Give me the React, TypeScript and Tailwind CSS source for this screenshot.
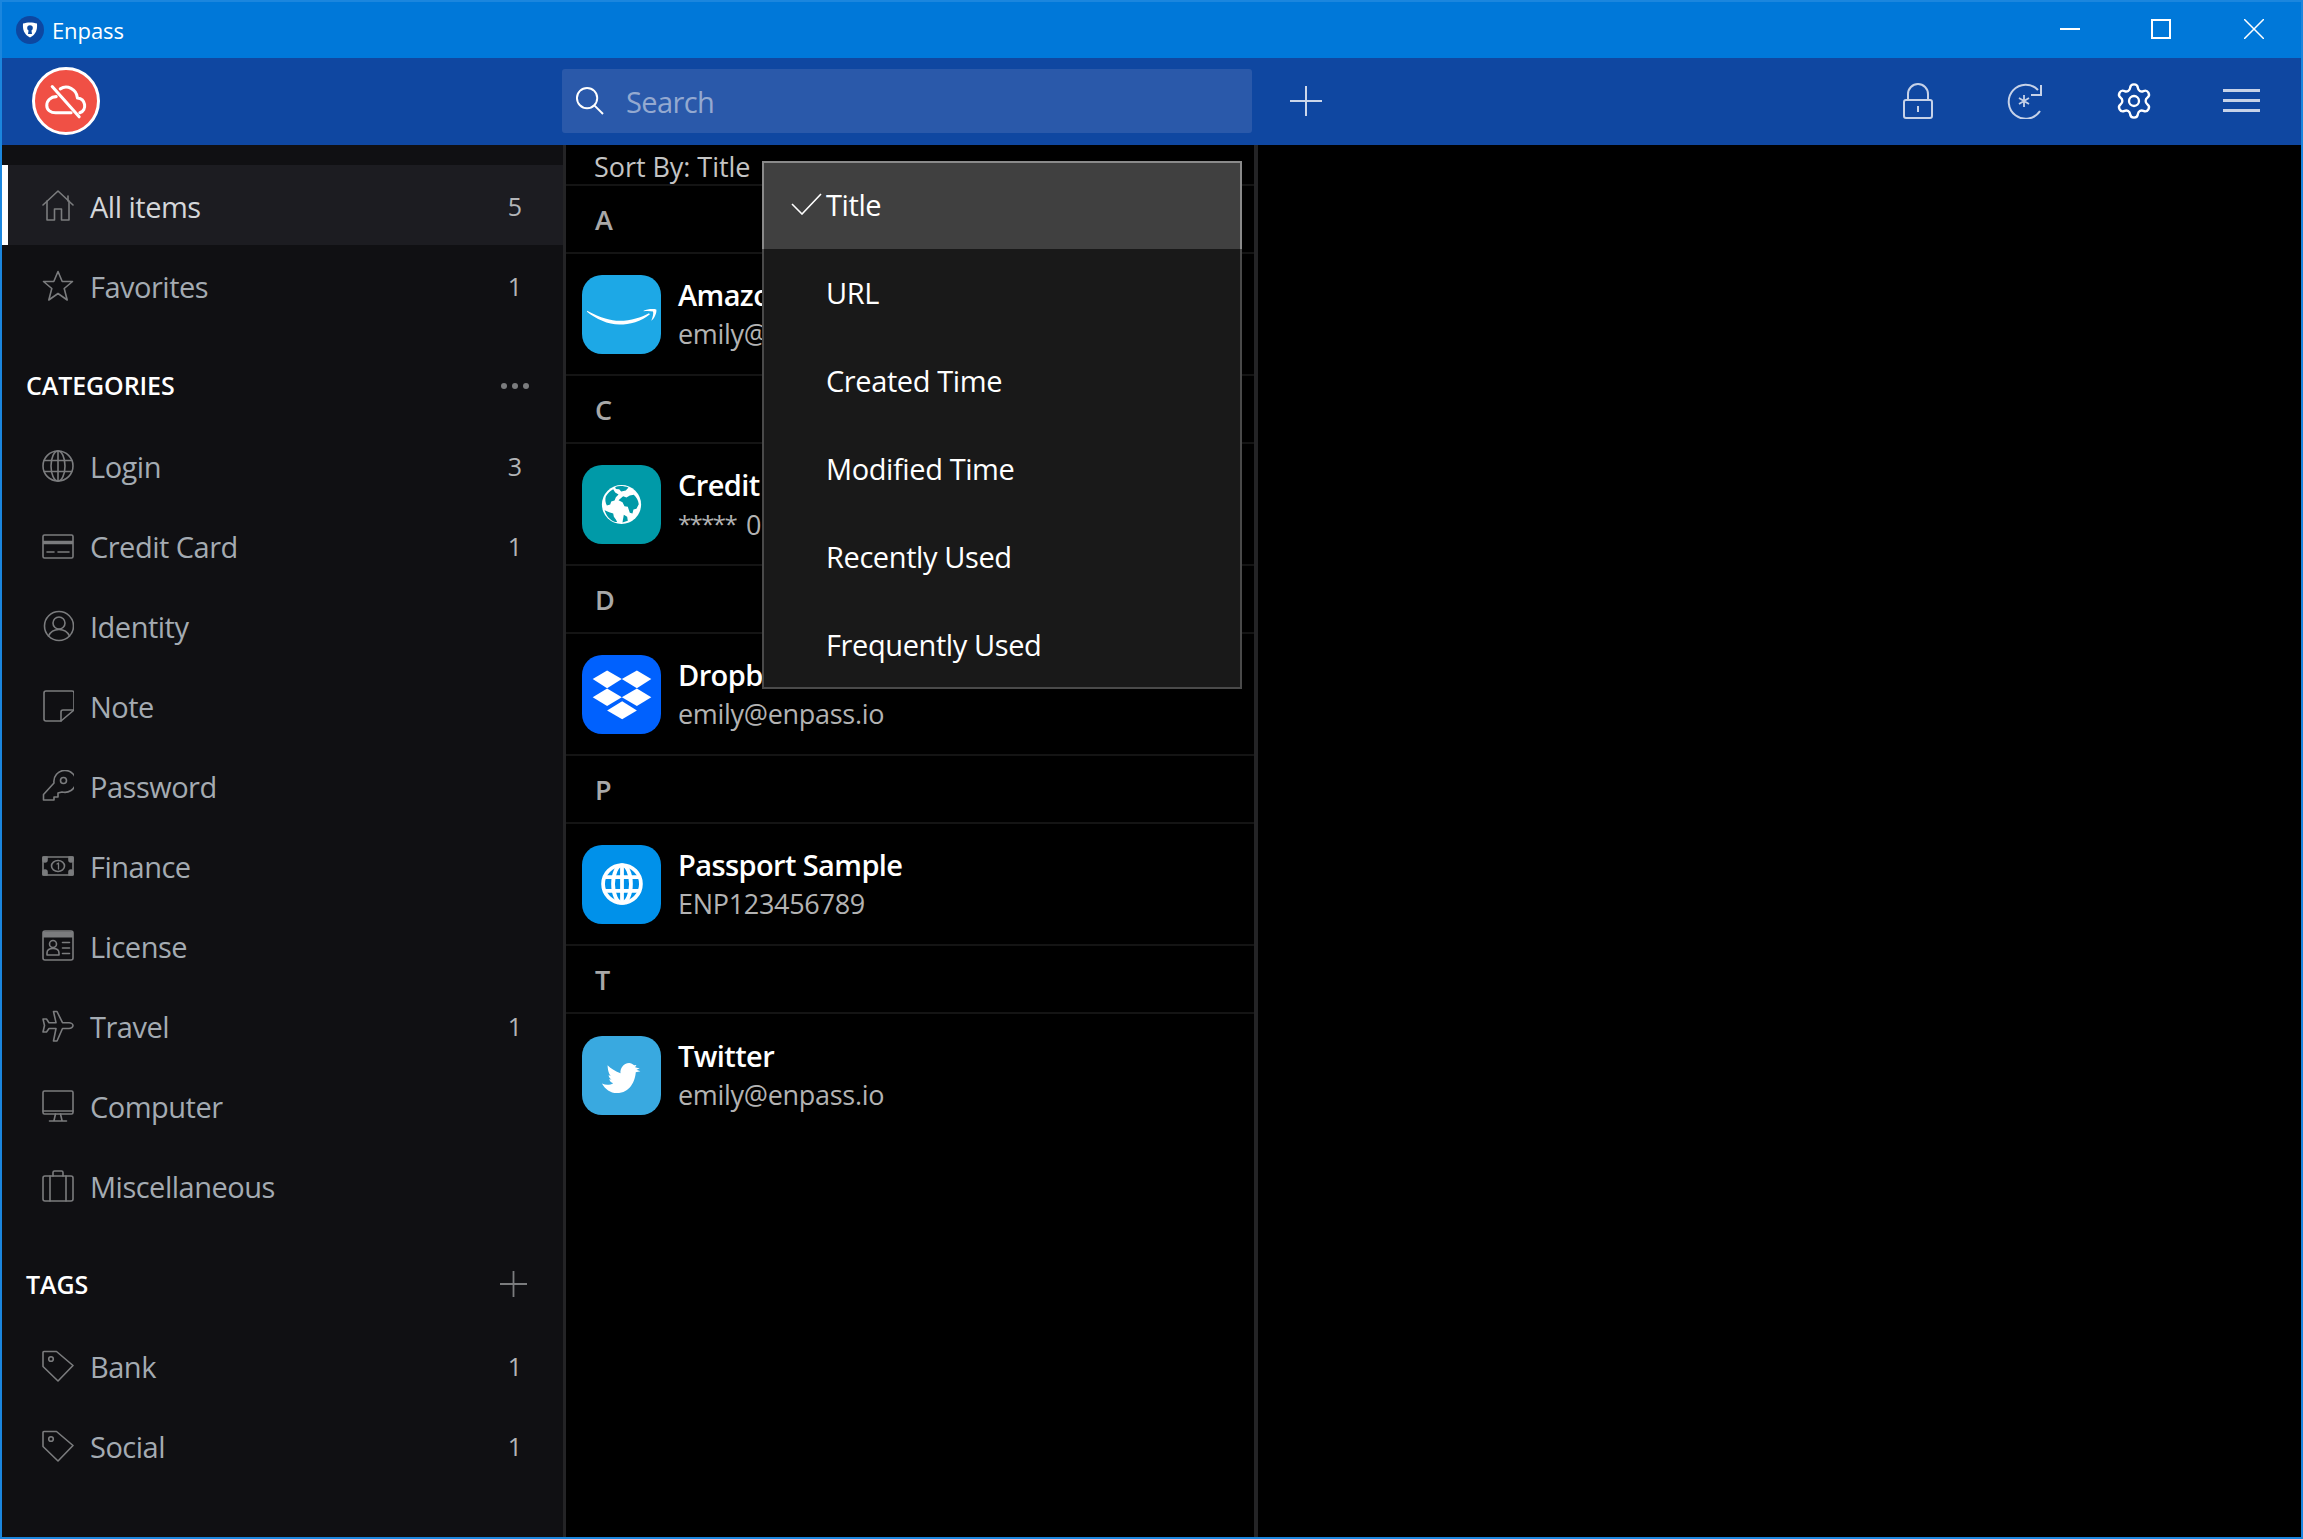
import type { ReactNode } from "react";
import { Settings } from "lucide-react";

const Glyph = ({ children }: { children: ReactNode }) => (
  <svg
    viewBox="0 0 32 32"
    fill="none"
    stroke="currentColor"
    strokeWidth="1.6"
    strokeLinecap="round"
    strokeLinejoin="round"
    className="mb-[2px] h-[32px] w-[32px] shrink-0 text-[#7b7c7e]"
  >
    {children}
  </svg>
);

const icons: Record<string, ReactNode> = {
  home: (
    <>
      <path d="M1 15 16 1l15 14" />
      <path d="M5 11v19h7.500V19h7v11H27V11" />
      <path d="M26 6v5" />
    </>
  ),
  star: <path d="M16 1.500l4.200 10h10.300l-8.300 7 3 11.500L16 23.500 6.800 30l3-11.500-8.300-7h10.300z" />,
  globe: (
    <>
      <circle cx="16" cy="16" r="15" />
      <ellipse cx="16" cy="16" rx="7" ry="15" />
      <path d="M16 1v30M2.500 10.500h27M2.500 21.500h27" />
    </>
  ),
  card: (
    <>
      <rect x="1" y="5" width="30" height="23" rx="1.500" />
      <path d="M1 12.500h30" strokeWidth="3.500" strokeLinecap="butt" />
      <path d="M5 22h7M16 22h11" />
    </>
  ),
  identity: (
    <>
      <circle cx="17" cy="16" r="14.500" />
      <circle cx="17" cy="13" r="6" />
      <path d="M6.500 26c2-4.500 6-6.500 10.500-6.500s8.500 2 10.500 6.500" />
    </>
  ),
  note: (
    <>
      <path d="M19 31H4a2 2 0 0 1-2-2V3a2 2 0 0 1 2-2h26a2 2 0 0 1 2 2v17z" />
      <path d="M19 31V22a2 2 0 0 1 2-2h11" />
    </>
  ),
  key: (
    <>
      <path d="M12 13a11 11 0 1 1 8 9l-4 1v4h-4v3H1.500v-5.500z" />
      <circle cx="21.500" cy="10.500" r="3" />
    </>
  ),
  finance: (
    <>
      <rect x="1" y="7" width="30" height="18" rx="1" />
      <path d="M1 7h4v3a2 2 0 0 1-4 0zM31 7h-4v3a2 2 0 0 0 4 0zM1 25h4v-3a2 2 0 0 0-4 0zM31 25h-4v-3a2 2 0 0 1 4 0z" fill="currentColor" />
      <ellipse cx="16" cy="16" rx="6.500" ry="5.500" />
      <path d="M15 14l1.500-1v6" strokeWidth="1.300" />
    </>
  ),
  license: (
    <>
      <rect x="1" y="1" width="30" height="29" rx="2" />
      <path d="M1 4.500h30" strokeWidth="6" strokeLinecap="butt" />
      <circle cx="11" cy="14" r="3.500" />
      <path d="M5 25v-2c0-3 2.500-4.500 6-4.500s6 1.500 6 4.500v2z" />
      <path d="M20.500 12.500h7M20.500 18h7M20.500 23.500h7" />
    </>
  ),
  plane: (
    <path d="M31 15.500c0-1.500-2-2.800-4-2.800h-6.500L15 1.500h-3.500L14 12.700H7L4.500 9H1l1.500 6.500L1 22h3.500L7 18.500h7L11.500 31H15l5.500-12.500H27c2 0 4-1.500 4-3z" />
  ),
  computer: (
    <>
      <rect x="1" y="1" width="30" height="23" rx="1.500" />
      <path d="M1 21h30" />
      <path d="M13.500 24l-1.500 6.500M18.500 24l1.500 6.500M7.500 31h17" />
    </>
  ),
  misc: (
    <>
      <rect x="1" y="6" width="30" height="25" rx="2" />
      <path d="M8 6v25M24 6v25M11 6V2.500A1.500 1.500 0 0 1 12.500 1h7A1.500 1.500 0 0 1 21 2.500V6" />
    </>
  ),
  tag: (
    <>
      <path d="M2 1.500h12.500L31 15.500 16 31 1 16.500V2.500a1 1 0 0 1 1-1z" />
      <circle cx="9" cy="9" r="2.300" />
    </>
  ),
};

type NavItem = { icon: string; label: string; count?: number; active?: boolean };

const topItems: NavItem[] = [
  { icon: "home", label: "All items", count: 5, active: true },
  { icon: "star", label: "Favorites", count: 1 },
];
const categories: NavItem[] = [
  { icon: "globe", label: "Login", count: 3 },
  { icon: "card", label: "Credit Card", count: 1 },
  { icon: "identity", label: "Identity" },
  { icon: "note", label: "Note" },
  { icon: "key", label: "Password" },
  { icon: "finance", label: "Finance" },
  { icon: "license", label: "License" },
  { icon: "plane", label: "Travel", count: 1 },
  { icon: "computer", label: "Computer" },
  { icon: "misc", label: "Miscellaneous" },
];
const tags: NavItem[] = [
  { icon: "tag", label: "Bank", count: 1 },
  { icon: "tag", label: "Social", count: 1 },
];

function NavRow({ item, top = false }: { item: NavItem; top?: boolean }) {
  return (
    <div
      className={`flex h-[80px] items-center border-l-[6px] pl-[34px] pr-[41px] ${
        item.active ? "border-white bg-[#1c1c21]" : "border-transparent"
      } ${top ? "pt-[4px]" : ""}`}
    >
      <Glyph>{icons[item.icon]}</Glyph>
      <span className={`ml-[16px] flex-1 text-[29px] tracking-[-0.5px] ${item.active ? "text-[#d4d6d9]" : "text-[#a4abb2]"}`}>
        {item.label}
      </span>
      {item.count !== undefined && <span className="text-[25px] text-[#b3b5b8]">{item.count}</span>}
    </div>
  );
}

function SectionHead({ title, className, children }: { title: string; className: string; children?: ReactNode }) {
  return (
    <div className={`flex items-center justify-between pl-[24px] pr-[35px] ${className}`}>
      <span className="text-[25px] font-semibold tracking-[-0.1px] text-white">{title}</span>
      {children}
    </div>
  );
}

const AmazonTile = (
  <svg viewBox="38 46 236 236" className="h-full w-full">
    <path d="M53 153C95 175 125 183 150 183c35 0 65-11 88-23l3 3c-26 22-61 31-91 31-35 0-70-16-97-38z" fill="#fff" />
    <path d="M222 153c10-5 28-7 38-4 2 9-5 26-15 34 5-13 7-23 5-28-8-2-18-2-28-1z" fill="#fff" />
  </svg>
);

const EarthTile = (
  <svg viewBox="22 22 238 238" className="h-full w-full">
    <circle cx="141" cy="141" r="59" fill="#fff" />
    <g fill="#009aa8">
      <path d="M122 88c12-4 28-3 40 2l-8 9-14 3-6-7-10-1z" />
      <path d="M94 116c6-10 14-17 22-21l6 10 10 6-8 8-4 10-10 3-3 9-10 3c-5-9-6-19-3-28z" />
      <path d="M132 128l14-12 10 4 10-6 12-2c8 7 14 18 15 28l-7 14-9 2-3 12-8-2-6-18-10-2-6-12z" />
      <path d="M90 158l14 6 12 4 2 10 6 8 4 8c-16-1-31-14-38-36z" />
      <path d="M148 172l10 6 2 12-16 5 2-12z" />
    </g>
  </svg>
);

const DropboxTile = (
  <svg viewBox="38 46 236 236" className="h-full w-full">
    <g fill="#fff">
      <polygon points="70,118 113,92 157,118 113,145" />
      <polygon points="157,118 202,92 245,118 202,145" />
      <polygon points="70,172 113,146 157,172 113,198" />
      <polygon points="157,172 202,146 245,172 202,198" />
      <polygon points="113,212 158,184 202,212 158,238" />
    </g>
  </svg>
);

const PassportTile = (
  <svg viewBox="0 0 40 40" className="h-[42px] w-[42px]" fill="none" stroke="#fff" strokeWidth="3.600">
    <circle cx="20" cy="20" r="18" />
    <ellipse cx="20" cy="20" rx="8.500" ry="18" />
    <path d="M20 2v36M3 13.500h34M3 26.500h34" />
  </svg>
);

const TwitterTile = (
  <svg viewBox="22 15 238 238" className="h-full w-full">
    <path
      d="M82 158c12 5 24 5 34-1-7-2-10-6-12-12l7 1c-5-3-8-7-9-13l7 2c-5-5-9-13-10-32 10 10 24 19 39 24-2-15 9-30 26-31 6 0 11 3 15 7l7-1-4 7 14 4-10 4 12 4-14 3c-2 26-17 63-57 63-20 0-35-12-45-29z"
      fill="#fff"
    />
  </svg>
);

const entries = [
  { letter: "A", title: "Amazon", sub: "emily@enpass.io", tile: "bg-[#1da8e6]", art: AmazonTile },
  { letter: "C", title: "Credit Card", sub: "0000", mask: true, tile: "bg-[#009aa8]", art: EarthTile },
  { letter: "D", title: "Dropbox", sub: "emily@enpass.io", tile: "bg-[#0061fe]", art: DropboxTile },
  { letter: "P", title: "Passport Sample", sub: "ENP123456789", tile: "bg-[#0091ea]", art: PassportTile },
  { letter: "T", title: "Twitter", sub: "emily@enpass.io", tile: "bg-[#39a9e0]", art: TwitterTile },
];

const sortOptions = ["Title", "URL", "Created Time", "Modified Time", "Recently Used", "Frequently Used"];

export default function App() {
  return (
    <div className="flex h-[1539px] w-[2303px] flex-col overflow-hidden border-2 border-[#1b86de] bg-black font-['Open_Sans',sans-serif]">
      {/* title bar */}
      <div className="flex h-[56px] shrink-0 items-center bg-[#0078d9] pl-[14px] pr-[37px]">
        <svg viewBox="0 0 28 28" className="h-[28px] w-[28px]">
          <circle cx="14" cy="14" r="14" fill="#0d47a1" />
          <path d="M7 7.500c4-1.500 10-1.500 14 0 .5 6-1 11-7 14-6-3-7.500-8-7-14z" fill="#fff" />
          <circle cx="14" cy="12" r="2.800" fill="#0d47a1" />
          <path d="M12.800 13h2.400l.8 5h-4z" fill="#0d47a1" />
        </svg>
        <span className="ml-[8px] text-[22px] tracking-[-0.1px] text-white">Enpass</span>
        <div className="flex-1" />
        <div className="mb-[2px] h-[2px] w-[20px] bg-white" />
        <div className="mb-[2px] ml-[71px] h-[20px] w-[20px] border-2 border-white" />
        <svg viewBox="0 0 20 20" className="mb-[2px] ml-[73px] h-[20px] w-[20px]" stroke="#fff" strokeWidth="1.500">
          <path d="M0 0l20 20M20 0L0 20" />
        </svg>
      </div>

      {/* toolbar */}
      <div className="flex h-[87px] shrink-0 items-center bg-[#0f47a1] pb-[2px]">
        <div className="ml-[30px] flex h-[68px] w-[68px] items-center justify-center rounded-full border-[3px] border-white bg-[#f05045]">
          <svg viewBox="91 29 184 184" className="h-[62px] w-[62px]" fill="none" stroke="#fff" strokeWidth="9" strokeLinecap="round" strokeLinejoin="round">
            <path d="M154 108c-16 0-28 12-28 26s12 22 26 22h46" />
            <path d="M166 85c20-13 48 0 51 27 24 2 30 36 7 44" />
            <path d="M142 78l80 90" />
          </svg>
        </div>
        <div className="ml-[462px] flex h-[64px] w-[690px] items-center rounded-[3px] bg-[#2a59aa] pl-[13px]">
          <svg viewBox="0 0 30 30" className="h-[29px] w-[29px]" fill="none" stroke="#fff" strokeWidth="2">
            <circle cx="12.500" cy="12.500" r="10.500" />
            <path d="M20 20l9 9" />
          </svg>
          <span className="ml-[22px] pt-[2px] text-[29px] tracking-[-0.6px] text-[#94a9d0]">Search</span>
        </div>
        <svg viewBox="0 0 32 30" className="ml-[38px] h-[30px] w-[32px]" stroke="#ccd7ea" strokeWidth="2">
          <path d="M16 0v30M0 15h32" />
        </svg>
        <div className="flex-1" />
        <svg viewBox="0 0 30 36" className="h-[36px] w-[30px]" fill="none" stroke="#c6d2e8" strokeWidth="2">
          <path d="M5 17V11a10 10 0 0 1 20 0v6" />
          <rect x="1" y="17" width="28" height="18" rx="2" />
          <path d="M15 23v6" />
        </svg>
        <svg viewBox="0 0 36 36" className="ml-[74px] h-[36px] w-[36px]" fill="none" stroke="#c6d2e8" strokeWidth="2">
          <path d="M33 28A17 17 0 1 1 31 7" />
          <path d="M34 2v10H24" />
          <path d="M17 12v12M12 15l10 6M22 15l-10 6" strokeWidth="1.800" />
        </svg>
        <Settings className="ml-[71px] h-[40px] w-[40px] text-white" strokeWidth={1.4} />
        <div className="ml-[69px] mr-[41px] flex w-[37px] flex-col gap-[7px]">
          <div className="h-[3px] bg-[#c6d2e8]" />
          <div className="h-[3px] bg-[#c6d2e8]" />
          <div className="h-[3px] bg-[#c6d2e8]" />
        </div>
      </div>

      <div className="relative flex min-h-0 flex-1">
        {/* sidebar */}
        <div className="w-[561px] shrink-0 overflow-hidden bg-[#101013] pt-[20px]">
          {topItems.map((item) => (
            <NavRow key={item.label} item={item} top />
          ))}
          <SectionHead title="CATEGORIES" className="h-[102px] pt-[20px]">
            <div className="mr-[-1px] flex gap-[5px]">
              <div className="h-[6px] w-[6px] rounded-full bg-[#7b7c7e]" />
              <div className="h-[6px] w-[6px] rounded-full bg-[#7b7c7e]" />
              <div className="h-[6px] w-[6px] rounded-full bg-[#7b7c7e]" />
            </div>
          </SectionHead>
          {categories.map((item) => (
            <NavRow key={item.label} item={item} />
          ))}
          <SectionHead title="TAGS" className="h-[100px] pt-[16px]">
            <svg viewBox="0 0 27 26" className="mb-[2px] mr-[1px] h-[26px] w-[27px]" stroke="#7b7c7e" strokeWidth="1.800">
              <path d="M13.500 0v26M0 13h27" />
            </svg>
          </SectionHead>
          {tags.map((item) => (
            <NavRow key={item.label} item={item} />
          ))}
          <SectionHead title="PASSWORD AUDIT" className="h-[114px] pt-[24px]" />
        </div>
        <div className="w-[3px] shrink-0 bg-[#242426]" />

        {/* item list */}
        <div className="w-[688px] shrink-0 bg-black">
          <div className="flex h-[41px] items-center border-b-2 border-[#141414] pl-[28px] pt-[6px] text-[27px] tracking-[-0.05px] text-[#c4c4c4]">
            Sort By: Title
          </div>
          {entries.map((entry, i) => (
            <div key={entry.letter}>
              <div className="flex h-[68px] items-center border-b-2 border-[#141414] pl-[29px] pt-[3px] text-[27px] font-semibold text-[#a8a8a8]">
                {entry.letter}
              </div>
              <div className={`flex h-[122px] items-center pl-[16px] ${i < entries.length - 1 ? "border-b-2 border-[#141414]" : ""}`}>
                <div className={`flex h-[79px] w-[79px] shrink-0 items-center justify-center overflow-hidden rounded-[20px] ${entry.tile}`}>
                  {entry.art}
                </div>
                <div className="ml-[17px] pt-[4px]">
                  <div className="text-[29px] font-semibold leading-[36px] tracking-[-0.6px] text-white">{entry.title}</div>
                  <div className="text-[27px] leading-[42px] tracking-[-0.3px] text-[#b3b3b3]">
                    {entry.mask && <span className="mr-[10px] align-[2px] text-[24px] tracking-[-1.6px]">*****</span>}
                    {entry.sub}
                  </div>
                </div>
              </div>
            </div>
          ))}
        </div>
        <div className="w-[4px] shrink-0 bg-[#242426]" />
        <div className="flex-1 bg-black" />

        {/* sort menu */}
        <div className="absolute left-[760px] top-[16px] w-[480px] bg-[#191919]">
          {sortOptions.map((option, i) => (
            <div
              key={option}
              className={`relative flex h-[88px] items-center border-x-2 pl-[62px] text-[29px] tracking-[-0.4px] text-white ${
                i === 0 ? "border-t-2 border-[#8a8a8a] bg-[#404040] pb-[3px]" : "border-[#4a4a4a]"
              } ${i === 5 ? "border-b-2 pt-[2px]" : ""}`}
            >
              {i === 0 && (
                <svg viewBox="0 0 31 22" className="absolute left-[27px] top-[30px] h-[22px] w-[31px]" fill="none" stroke="#fff" strokeWidth="1.600">
                  <path d="M1 11l10 10L30 1" />
                </svg>
              )}
              {option}
            </div>
          ))}
        </div>
      </div>
    </div>
  );
}
